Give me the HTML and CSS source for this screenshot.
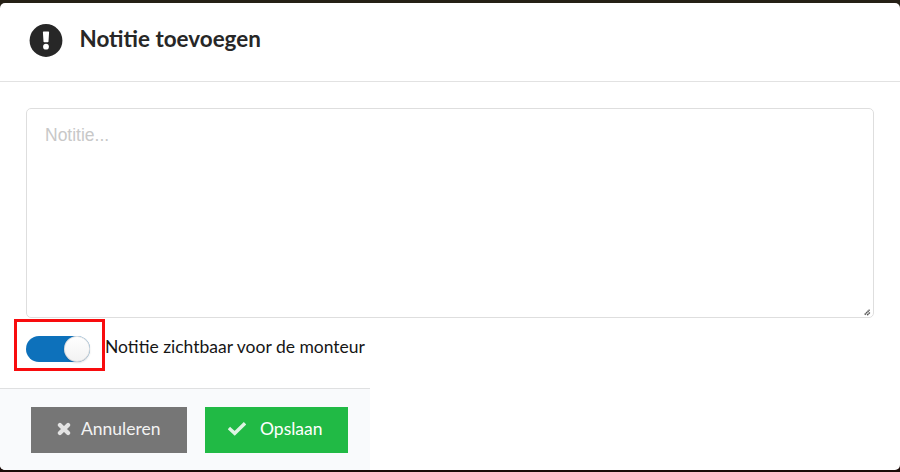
FILE: index.html
```html
<!DOCTYPE html>
<html lang="nl">
<head>
<meta charset="utf-8">
<title>Notitie toevoegen</title>
<link rel="stylesheet" href="styles.css">
</head>
<body>
<div class="modal">
  <header class="header">
    <svg class="header-icon" width="34" height="34" viewBox="0 0 34 34" aria-hidden="true">
      <circle cx="17" cy="17.5" r="16.4" fill="#272727"/>
      <path d="M13.9 9.3q0-.7.7-.7h4.8q.7 0 .7.7l-.6 9.2q0 .7-.7.7h-3.6q-.7 0-.7-.7z" fill="#fff"/>
      <circle cx="17" cy="23.7" r="2.9" fill="#fff"/>
    </svg>
    <h1 class="title">Notitie toevoegen</h1>
  </header>
  <main class="content">
    <div class="note-wrap">
      <textarea class="note" placeholder="Notitie..."></textarea>
      <svg class="grip" width="7" height="7" viewBox="0 0 7 7" aria-hidden="true"><path d="M.7 5.6L5.6.7M3.2 6.1L6.1 3.2" stroke="#555" stroke-width="1.5" stroke-dasharray="1.6 .4"/></svg>
    </div>
    <div class="field">
      <div class="highlight"><span class="toggle"><span class="knob"></span></span></div>
      <span class="label">Notitie zichtbaar voor de monteur</span>
    </div>
  </main>
  <footer class="actions">
    <button class="button cancel">
      <svg class="cross" width="14" height="14" viewBox="0 0 14 14" aria-hidden="true"><path d="M2.9 2.9l8.2 8.2M11.1 2.9l-8.2 8.2" stroke="#fff" stroke-width="4.2" stroke-linecap="round"/></svg>
      <span>Annuleren</span>
    </button>
    <button class="button save">
      <svg class="check" width="18" height="14" viewBox="0 0 18 14" aria-hidden="true"><path d="M2.2 7.2l4.5 4.1L15.8 2.5" fill="none" stroke="#fff" stroke-width="3.5" stroke-linecap="square"/></svg>
      <span>Opslaan</span>
    </button>
  </footer>
</div>
</body>
</html>
```
FILE: styles.css
```css
* { box-sizing: border-box; }
body {
  margin: 0;
  height: 472px;
  padding: 3px 0 2px;
  background: linear-gradient(#252016 50%, #1a0b08 50%);
  font-family: Lato, sans-serif;
  overflow: hidden;
}
.modal {
  height: 467px;
  background: #fff;
  border-radius: 5px;
  overflow: hidden;
}
.header {
  display: flex;
  height: 79px;
  padding: 20px 29px 0;
  border-bottom: 1px solid #e2e2e2;
}
.header-icon { flex: none; }
.title {
  margin: 2px 0 0 16.5px;
  font-size: 22.45px;
  line-height: 28px;
  font-weight: 700;
  color: #272727;
}
.content {
  height: 306px;
  padding: 26px 26px 0;
}
.note-wrap {
  position: relative;
  height: 211px;
}
.note {
  display: block;
  width: 848px;
  height: 210px;
  padding: 16px 18px;
  border: 1px solid #dedede;
  border-radius: 5px;
  background: #fff;
  font: 17.5px/21px "Liberation Sans", sans-serif;
  resize: none;
  outline: none;
}
.note::placeholder { color: #c8c8c8; }
.grip {
  position: absolute;
  right: 3px;
  bottom: 3px;
}
.field {
  display: flex;
  margin-left: -12.5px;
}
.highlight {
  width: 91px;
  height: 52px;
  padding: 14px 9.5px;
  border: 3px solid #f80c0e;
}
.toggle {
  display: flex;
  justify-content: flex-end;
  width: 64px;
  height: 26px;
  border-radius: 13px;
  background: #0d71bb;
}
.knob {
  width: 26px;
  height: 26px;
  border-radius: 50%;
  background: linear-gradient(#fff, #f2f2f2);
  box-shadow: 0 1px 2px rgba(34, 36, 38, .15), 0 0 0 1px rgba(34, 36, 38, .12) inset;
}
.label {
  margin-top: 17px;
  margin-left: .5px;
  font-size: 17.5px;
  line-height: 22px;
  color: #161616;
  white-space: nowrap;
}
.actions {
  display: flex;
  gap: 18px;
  width: 370px;
  height: 82px;
  padding: 18px 22px 0 31px;
  border-top: 1px solid #dfe0e1;
  background: #f9fafc;
}
.button {
  display: flex;
  align-items: center;
  height: 46px;
  padding: 0 0 2px;
  border: 0;
  font: 17.5px/22px Lato, sans-serif;
  color: #fff;
  white-space: nowrap;
}
.cancel {
  width: 156px;
  padding-left: 26px;
  background: #767676;
  color: #f2f2f2;
}
.save {
  width: 143px;
  padding-left: 23px;
  background: #21ba45;
}
.cross { margin-right: 10px; opacity: .8; }
.check { margin-right: 14px; opacity: .85; }
```
